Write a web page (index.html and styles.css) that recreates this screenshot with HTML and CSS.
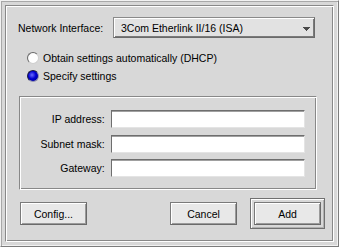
FILE: index.html
```html
<!DOCTYPE html>
<html lang="en">
<head>
  <meta charset="UTF-8">
  <title>Network Interface</title>
  <link rel="stylesheet" href="styles.css">
</head>
<body>
  <div class="window">
    <div class="panel">

      <div class="iface">
        <span class="iface-label">Network Interface:</span>
        <div class="select">
          <span>3Com Etherlink II/16 (ISA)</span>
          <svg class="arrow" width="7" height="5" viewBox="0 0 7 5"><path d="M0 0h7v1h-1v1h-1v1h-1v1h-1v-1h-1v-1h-1v-1h-1z" fill="#4a4a4a"/></svg>
        </div>
      </div>

      <div class="radios">
        <div class="radio"><span class="dot"></span>Obtain settings automatically (DHCP)</div>
        <div class="radio"><span class="dot on"></span>Specify settings</div>
      </div>

      <div class="group">
        <div class="field"><span class="field-label">IP address:</span><span class="input"></span></div>
        <div class="field"><span class="field-label">Subnet mask:</span><span class="input"></span></div>
        <div class="field"><span class="field-label">Gateway:</span><span class="input"></span></div>
      </div>

      <div class="buttons">
        <button class="btn config">Config...</button>
        <button class="btn cancel">Cancel</button>
        <div class="default-ring"><button class="btn">Add</button></div>
      </div>

    </div>
  </div>
</body>
</html>
```

FILE: styles.css
```css
body {
  margin: 0;
  background: #d8d8d8;
  font-family: "Liberation Sans", Arial, sans-serif;
  font-size: 10.5px;
  color: #000;
}

.window {
  width: 339px;
  height: 247px;
  box-sizing: border-box;
  border: 1px solid;
  border-color: #f2f2f2 #7c7c7c #7c7c7c #f2f2f2;
  box-shadow: inset 1px 1px 0 #a8a8a8, inset -1px -1px 0 #f2f2f2;
  padding: 4px;
  background: #d8d8d8;
}

/* etched inner frame */
.panel {
  height: 100%;
  box-sizing: border-box;
  border: 1px solid;
  border-color: #888 #fff #fff #888;
  box-shadow: inset 1px 1px 0 #fff, inset -1px -1px 0 #888;
  padding: 11px 8px 0 12px;
  display: flex;
  flex-direction: column;
}

.iface {
  display: flex;
  align-items: center;
  height: 21px;
}

.iface-label {
  width: 95px;
}

.select {
  width: 202px;
  height: 21px;
  box-sizing: border-box;
  display: flex;
  align-items: center;
  justify-content: space-between;
  padding: 0 4px 0 7px;
  background: #e2e2e2;
  border: 1px solid #8a8a8a;
  border-right-color: #6a6a6a;
  border-bottom-color: #6a6a6a;
  box-shadow: inset 1px 1px 0 #fff, inset -1px -1px 0 #7a7a7a;
}

.arrow {
  margin-top: 3px;
}

.radios {
  margin-top: 11px;
}

.radio {
  display: flex;
  align-items: center;
  height: 18px;
  padding-left: 9px;
  gap: 4px;
}

.dot {
  width: 12px;
  height: 12px;
  box-sizing: border-box;
  border-radius: 50%;
  border: 1px solid #6a6a6a;
  border-right-color: #d0d0d0;
  border-bottom-color: #d0d0d0;
  background: radial-gradient(circle at 60% 60%, #fff 55%, #e4e4e4 100%);
}

.dot.on {
  border-color: #1a1a40 #9090b0 #9090b0 #1a1a40;
  background: radial-gradient(circle at 40% 40%, #6a6aff 0, #0000d0 45%, #000080 100%);
}

.group {
  margin: 11px 0 0 1px;
  width: 298px;
  box-sizing: border-box;
  border: 1px solid;
  border-color: #888 #fff #fff #888;
  box-shadow: inset 1px 1px 0 #fff, inset -1px -1px 0 #888;
  padding: 13px 11px 12px 1px;
  display: flex;
  flex-direction: column;
  gap: 6.5px;
}

.field {
  display: flex;
  align-items: center;
  height: 18px;
}

.field-label {
  width: 84px;
  text-align: right;
  padding-right: 6px;
}

.input {
  width: 195px;
  height: 18px;
  box-sizing: border-box;
  background: #fff;
  border: 1px solid;
  border-color: #6e6e6e #e4e4e4 #e4e4e4 #6e6e6e;
  box-shadow: inset 0 1px 0 #a0a0a0;
}

.buttons {
  display: flex;
  align-items: center;
  margin-top: 8px;
  padding-left: 2px;
}

.btn {
  width: 67px;
  height: 23px;
  box-sizing: border-box;
  font: inherit;
  color: #000;
  background: #e8e8e8;
  border: 1px solid #7a7a7a;
  border-right-color: #6a6a6a;
  border-bottom-color: #6a6a6a;
  box-shadow: inset 1px 1px 0 #fff, inset -1px -1px 0 #9a9a9a;
  padding: 0;
}

.cancel {
  margin-left: auto;
  margin-right: 13px;
}

.default-ring {
  width: 75px;
  height: 31px;
  box-sizing: border-box;
  border: 1px solid #707070;
  box-shadow: inset 1px 1px 0 #fff, inset -1px -1px 0 #b0b0b0;
  display: flex;
  align-items: center;
  justify-content: center;
}
```
